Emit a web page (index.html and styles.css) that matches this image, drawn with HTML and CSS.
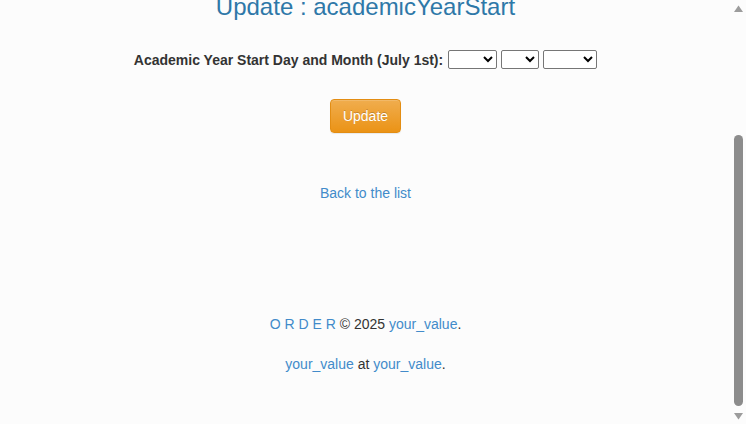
FILE: index.html
```html
<!DOCTYPE html>
<html lang="en">
<head>
<meta charset="utf-8">
<title>Update : academicYearStart</title>
<link rel="stylesheet" href="styles.css">
</head>
<body>
<div class="window">
  <main class="viewport">
    <div class="page">
      <h1 class="title">Update : academicYearStart</h1>
      <form class="form-row">
        <label class="field-label">Academic Year Start Day and Month (July 1st):</label>
        <select class="sel sel-day"></select>
        <select class="sel sel-month"></select>
        <select class="sel sel-year"></select>
      </form>
      <div class="actions">
        <button type="button" class="btn-update">Update</button>
      </div>
      <p class="back"><a href="#">Back to the list</a></p>
      <footer class="footer">
        <p class="foot-line"><a href="#">O R D E R</a> © 2025 <a href="#">your_value</a>.</p>
        <p class="foot-line"><a href="#">your_value</a> at <a href="#">your_value</a>.</p>
      </footer>
    </div>
  </main>
  <div class="scrollbar" aria-hidden="true">
    <svg class="arrow arrow-up" width="9" height="7" viewBox="0 0 9 7"><path d="M4.5 0.5 L9 7 L0 7 Z" fill="#9c9c9c"/></svg>
    <div class="thumb"></div>
    <svg class="arrow arrow-down" width="9" height="7" viewBox="0 0 9 7"><path d="M0 0 L9 0 L4.5 6.5 Z" fill="#9c9c9c"/></svg>
  </div>
</div>
</body>
</html>
```

FILE: styles.css
```css
html, body {
  margin: 0;
  height: 424px;
  overflow: hidden;
}
body {
  background: #fcfcfc;
  color: #333;
  font-family: "Liberation Sans", Arial, sans-serif;
  font-size: 14px;
  line-height: 20px;
}
a {
  color: #428bca;
  text-decoration: none;
}
.window {
  display: flex;
  height: 424px;
}
.viewport {
  flex: 1;
  height: 424px;
  overflow: hidden;
  display: flex;
  flex-direction: column;
  justify-content: flex-end;
}
.page {
  flex-shrink: 0;
  padding-bottom: 50px;
  text-align: center;
}
.title {
  margin: 0;
  font-size: 24px;
  line-height: 26px;
  font-weight: normal;
  color: #2e78a8;
}
.form-row {
  margin: 30px 0 0;
  display: flex;
  justify-content: center;
  align-items: center;
  height: 19px;
}
.field-label {
  font-weight: bold;
  margin-right: 5px;
}
.sel {
  height: 19px;
  margin: 0 4px 0 0;
  padding: 0;
  border: 1px solid #767676;
  border-radius: 2px;
  background: #fff;
  font-size: 13px;
}
.sel:last-child {
  margin-right: 0;
}
.sel-day { width: 49px; }
.sel-month { width: 38px; }
.sel-year { width: 54px; }
.actions {
  margin-top: 30px;
  line-height: 0;
}
.btn-update {
  font-family: inherit;
  font-size: 14px;
  line-height: 20px;
  padding: 6px 12px;
  color: #fff;
  border: 1px solid #e38d13;
  border-radius: 4px;
  background: linear-gradient(to bottom, #f0ad4e 0%, #eb9316 100%);
  box-shadow: inset 0 1px 0 rgba(255,255,255,.15), 0 1px 1px rgba(0,0,0,.075);
  text-shadow: 0 -1px 0 rgba(0,0,0,.2);
  cursor: pointer;
}
.back {
  margin: 50px 0 0;
}
.footer {
  margin-top: 111px;
}
.foot-line {
  margin: 0 0 20px;
}
.foot-line:last-child {
  margin-bottom: 0;
}
.scrollbar {
  width: 15px;
  flex-shrink: 0;
  display: flex;
  flex-direction: column;
  align-items: center;
  background: #fcfcfc;
}
.arrow {
  display: block;
  flex-shrink: 0;
}
.arrow-up {
  margin-top: 5px;
}
.thumb {
  width: 9px;
  height: 271px;
  margin-top: 123px;
  border-radius: 5px;
  background: #8c8c8c;
}
.arrow-down {
  margin-top: 7px;
}
```
